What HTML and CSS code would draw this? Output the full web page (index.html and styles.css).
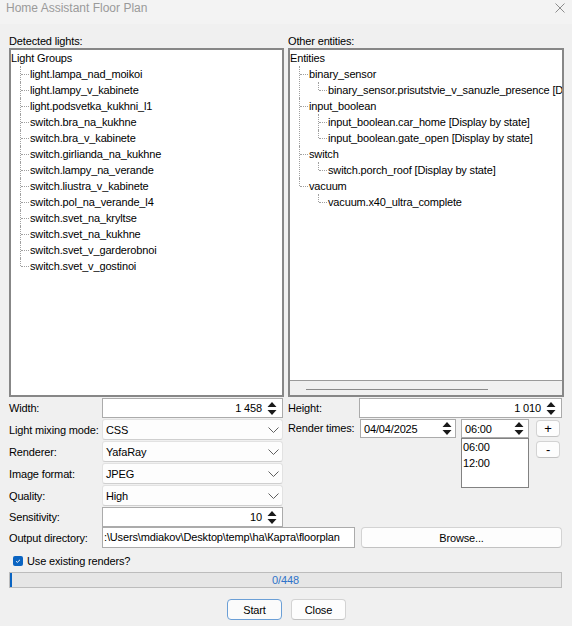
FILE: index.html
```html
<!DOCTYPE html>
<html>
<head>
<meta charset="utf-8">
<title>Home Assistant Floor Plan</title>
<link rel="stylesheet" href="styles.css">
</head>
<body>
<div class="window">
  <div class="titlebar">
    <span class="title">Home Assistant Floor Plan</span>
    <svg class="close" width="10" height="10" viewBox="0 0 10 10"><path d="M0.5 0.5 L9.5 9.5 M9.5 0.5 L0.5 9.5" stroke="#8c8c8c" stroke-width="1" fill="none"/></svg>
  </div>
  <div class="content">
    <div class="panes">
      <div class="pane">
        <div class="caption">Detected lights:</div>
        <div class="treebox">
          <div class="tree">
            <div class="node">Light Groups</div>
            <ul class="children">
              <li><div class="node">light.lampa_nad_moikoi</div></li>
              <li><div class="node">light.lampy_v_kabinete</div></li>
              <li><div class="node">light.podsvetka_kukhni_l1</div></li>
              <li><div class="node">switch.bra_na_kukhne</div></li>
              <li><div class="node">switch.bra_v_kabinete</div></li>
              <li><div class="node">switch.girlianda_na_kukhne</div></li>
              <li><div class="node">switch.lampy_na_verande</div></li>
              <li><div class="node">switch.liustra_v_kabinete</div></li>
              <li><div class="node">switch.pol_na_verande_l4</div></li>
              <li><div class="node">switch.svet_na_kryltse</div></li>
              <li><div class="node">switch.svet_na_kukhne</div></li>
              <li><div class="node">switch.svet_v_garderobnoi</div></li>
              <li><div class="node">switch.svet_v_gostinoi</div></li>
            </ul>
          </div>
        </div>
      </div>
      <div class="pane">
        <div class="caption">Other entities:</div>
        <div class="treebox scrolled">
          <div class="viewport">
            <div class="tree">
              <div class="node">Entities</div>
              <ul class="children">
                <li><div class="node">binary_sensor</div>
                  <ul class="children">
                    <li><div class="node">binary_sensor.prisutstvie_v_sanuzle_presence [Display by state]</div></li>
                  </ul>
                </li>
                <li><div class="node">input_boolean</div>
                  <ul class="children">
                    <li><div class="node">input_boolean.car_home [Display by state]</div></li>
                    <li><div class="node">input_boolean.gate_open [Display by state]</div></li>
                  </ul>
                </li>
                <li><div class="node">switch</div>
                  <ul class="children">
                    <li><div class="node">switch.porch_roof [Display by state]</div></li>
                  </ul>
                </li>
                <li><div class="node">vacuum</div>
                  <ul class="children">
                    <li><div class="node">vacuum.x40_ultra_complete</div></li>
                  </ul>
                </li>
              </ul>
            </div>
          </div>
          <div class="hscroll"><div class="thumb"></div></div>
        </div>
      </div>
    </div>

    <div class="form">
      <div class="col">
        <div class="frow">
          <span class="flabel">Width:</span>
          <div class="spin field"><span class="val">1 458</span>
            <svg class="arrows" width="10" height="15" viewBox="0 0 10 15"><path d="M0.5 6 L5 1 L9.5 6 Z M0.5 9 L5 14 L9.5 9 Z" fill="#1a1a1a"/></svg>
          </div>
        </div>
        <div class="frow">
          <span class="flabel">Light mixing mode:</span>
          <div class="combo field"><span>CSS</span>
            <svg class="chev" width="11" height="6" viewBox="0 0 11 6"><path d="M0.5 0.5 L5.5 5.5 L10.5 0.5" stroke="#606060" fill="none"/></svg>
          </div>
        </div>
        <div class="frow">
          <span class="flabel">Renderer:</span>
          <div class="combo field"><span>YafaRay</span>
            <svg class="chev" width="11" height="6" viewBox="0 0 11 6"><path d="M0.5 0.5 L5.5 5.5 L10.5 0.5" stroke="#606060" fill="none"/></svg>
          </div>
        </div>
        <div class="frow">
          <span class="flabel">Image format:</span>
          <div class="combo field"><span>JPEG</span>
            <svg class="chev" width="11" height="6" viewBox="0 0 11 6"><path d="M0.5 0.5 L5.5 5.5 L10.5 0.5" stroke="#606060" fill="none"/></svg>
          </div>
        </div>
        <div class="frow">
          <span class="flabel">Quality:</span>
          <div class="combo field"><span>High</span>
            <svg class="chev" width="11" height="6" viewBox="0 0 11 6"><path d="M0.5 0.5 L5.5 5.5 L10.5 0.5" stroke="#606060" fill="none"/></svg>
          </div>
        </div>
        <div class="frow">
          <span class="flabel">Sensitivity:</span>
          <div class="spin field"><span class="val">10</span>
            <svg class="arrows" width="10" height="15" viewBox="0 0 10 15"><path d="M0.5 6 L5 1 L9.5 6 Z M0.5 9 L5 14 L9.5 9 Z" fill="#1a1a1a"/></svg>
          </div>
        </div>
      </div>
      <div class="col">
        <div class="frow">
          <span class="flabel rlabel">Height:</span>
          <div class="spin rfield"><span class="val">1 010</span>
            <svg class="arrows" width="10" height="15" viewBox="0 0 10 15"><path d="M0.5 6 L5 1 L9.5 6 Z M0.5 9 L5 14 L9.5 9 Z" fill="#1a1a1a"/></svg>
          </div>
        </div>
        <div class="times">
          <span class="flabel tlabel">Render times:</span>
          <div class="spin date"><span class="lval">04/04/2025</span>
            <svg class="arrows" width="10" height="15" viewBox="0 0 10 15"><path d="M0.5 6 L5 1 L9.5 6 Z M0.5 9 L5 14 L9.5 9 Z" fill="#1a1a1a"/></svg>
          </div>
          <div class="timecol">
            <div class="spin time"><span class="lval">06:00</span>
              <svg class="arrows" width="10" height="15" viewBox="0 0 10 15"><path d="M0.5 6 L5 1 L9.5 6 Z M0.5 9 L5 14 L9.5 9 Z" fill="#1a1a1a"/></svg>
            </div>
            <div class="timelist">
              <div class="titem">06:00</div>
              <div class="titem">12:00</div>
            </div>
          </div>
          <div class="pmcol">
            <button class="btn pm">+</button>
            <button class="btn pm">-</button>
          </div>
        </div>
      </div>
    </div>

    <div class="outrow">
      <span class="flabel">Output directory:</span>
      <div class="outfield">:\Users\mdiakov\Desktop\temp\ha\Карта\floorplan</div>
      <button class="btn browse">Browse...</button>
    </div>

    <div class="checkrow">
      <span class="checkbox">
        <svg width="10" height="10" viewBox="0 0 10 10"><path d="M3 5.2 L4.3 6.4 L7 3.8" stroke="#ffffff" stroke-width="0.9" fill="none"/></svg>
      </span>
      <span class="checklabel">Use existing renders?</span>
    </div>

    <div class="progress">
      <div class="chunk"></div>
      <span class="ptext">0/448</span>
    </div>

    <div class="buttons">
      <button class="btn start">Start</button>
      <button class="btn close-btn">Close</button>
    </div>
  </div>
</div>
</body>
</html>
```

FILE: styles.css
```css
html, body {
  margin: 0;
  padding: 0;
}
body {
  background: #f0f0f0;
  font-family: "Liberation Sans", Arial, sans-serif;
  font-size: 11px;
  letter-spacing: -0.15px;
  color: #000;
}
.window {
  width: 572px;
  height: 626px;
  overflow: hidden;
}
.titlebar {
  height: 24px;
  background: #f3f3f3;
  display: flex;
  align-items: flex-start;
  justify-content: space-between;
  padding: 0 7px 0 6px;
  box-sizing: border-box;
}
.title {
  font-family: "Liberation Sans", Arial, sans-serif;
  font-size: 12px;
  letter-spacing: 0;
  line-height: 16px;
  color: #9a9a9a;
}
.close {
  margin-top: 3px;
}
.content {
  padding: 10px 8px 0 9px;
}
.panes {
  display: grid;
  grid-template-columns: 275px 276px;
  column-gap: 4px;
}
.caption {
  height: 14px;
  line-height: 14px;
}
.treebox {
  height: 349px;
  border: 2px solid #878787;
  box-sizing: border-box;
  background: #fff;
  overflow: hidden;
}
.treebox.scrolled {
  display: flex;
  flex-direction: column;
}
.viewport {
  flex: 1;
  overflow: hidden;
  background: #fff;
}
.hscroll {
  height: 15px;
  border-top: 1px solid #9a9a9a;
  background: #f0f0f0;
  padding-top: 8px;
  box-sizing: border-box;
}
.thumb {
  margin-left: 16px;
  width: 182px;
  height: 1px;
  background: #8a8a8a;
}
.tree {
  white-space: nowrap;
}
.node {
  height: 16px;
  line-height: 16px;
}
.children {
  list-style: none;
  margin: 0;
  padding: 0 0 0 9px;
}
.children li {
  position: relative;
  padding-left: 10px;
}
.children li::before {
  content: "";
  position: absolute;
  left: 0;
  top: 0;
  bottom: 0;
  border-left: 1px dotted #a0a0a0;
}
.children li:last-child::before {
  bottom: auto;
  height: 8px;
}
.children li::after {
  content: "";
  position: absolute;
  left: 1px;
  top: 8px;
  width: 8px;
  border-top: 1px dotted #a0a0a0;
}

.form {
  margin-top: 1px;
  display: grid;
  grid-template-columns: 275px 276px;
  column-gap: 4px;
  align-items: start;
}
.col {
  display: flex;
  flex-direction: column;
  gap: 1px;
}
.frow {
  display: flex;
  align-items: center;
}
.flabel {
  width: 93px;
  flex: none;
}
.rlabel {
  width: 71px;
}
.field {
  width: 181px;
}
.rfield {
  width: 203px;
}
.spin {
  height: 20px;
  box-sizing: border-box;
  background: #fff;
  border: 1px solid #ababab;
  display: flex;
  align-items: center;
  justify-content: flex-end;
  padding: 0 5px 0 3px;
  gap: 5px;
}
.spin .val {
  flex: 1;
  text-align: right;
}
.spin .lval {
  flex: 1;
  text-align: left;
}
.combo {
  height: 21px;
  box-sizing: border-box;
  background: #fdfdfd;
  border: 1px solid #e2e2e2;
  border-bottom-color: #cfcfcf;
  border-radius: 3px;
  display: flex;
  align-items: center;
  justify-content: space-between;
  padding: 0 3px 0 3px;
}
.times {
  display: flex;
  align-items: flex-start;
}
.tlabel {
  width: 72px;
  height: 19px;
  line-height: 19px;
}
.date {
  width: 96px;
  height: 19px;
  padding-right: 3px;
}
.timecol {
  margin-left: 5px;
  width: 68px;
  display: flex;
  flex-direction: column;
}
.time {
  height: 19px;
  padding-right: 4px;
}
.timelist {
  height: 50px;
  box-sizing: border-box;
  border: 1px solid #828282;
  background: #fff;
  padding: 0 1px;
}
.titem {
  height: 16px;
  line-height: 16px;
}
.pmcol {
  margin-left: 7px;
  margin-top: 1px;
  display: flex;
  flex-direction: column;
  gap: 4px;
}
.btn {
  font-family: "Liberation Sans", Arial, sans-serif;
  font-size: 11px;
  letter-spacing: -0.15px;
  color: #000;
  background: #fdfdfd;
  border: 1px solid #d3d3d3;
  border-bottom-color: #c2c2c2;
  border-radius: 4px;
  padding: 0;
  margin: 0;
}
.pm {
  width: 24px;
  height: 17px;
  font-size: 13px;
  line-height: 14px;
}

.outrow {
  display: flex;
  align-items: center;
  height: 21px;
}
.outfield {
  width: 253px;
  height: 21px;
  box-sizing: border-box;
  background: #fff;
  border: 1px solid #ababab;
  line-height: 19px;
  padding-left: 1px;
  overflow: hidden;
  white-space: nowrap;
}
.browse {
  margin-left: 6px;
  width: 201px;
  height: 21px;
}
.checkrow {
  margin-top: 6px;
  height: 14px;
  display: flex;
  align-items: center;
  padding-left: 4px;
}
.checkbox {
  width: 10px;
  height: 10px;
  border-radius: 2px;
  background: #0a64c2;
  display: flex;
}
.checklabel {
  margin-left: 4px;
}
.progress {
  margin-top: 4px;
  width: 553px;
  height: 16px;
  box-sizing: border-box;
  border: 1px solid #bcbcbc;
  background: #e6e6e6;
  display: flex;
  align-items: center;
  position: relative;
}
.chunk {
  width: 2px;
  height: 14px;
  background: #0a64c2;
}
.ptext {
  position: absolute;
  left: 0;
  right: 0;
  text-align: center;
  color: #2f73c9;
  line-height: 14px;
}
.buttons {
  margin-top: 11px;
  display: flex;
  justify-content: center;
  gap: 9px;
}
.start, .close-btn {
  width: 55px;
  height: 21px;
}
.start {
  border-color: #6b9fd6;
  background: #fbfbfb;
}
```
